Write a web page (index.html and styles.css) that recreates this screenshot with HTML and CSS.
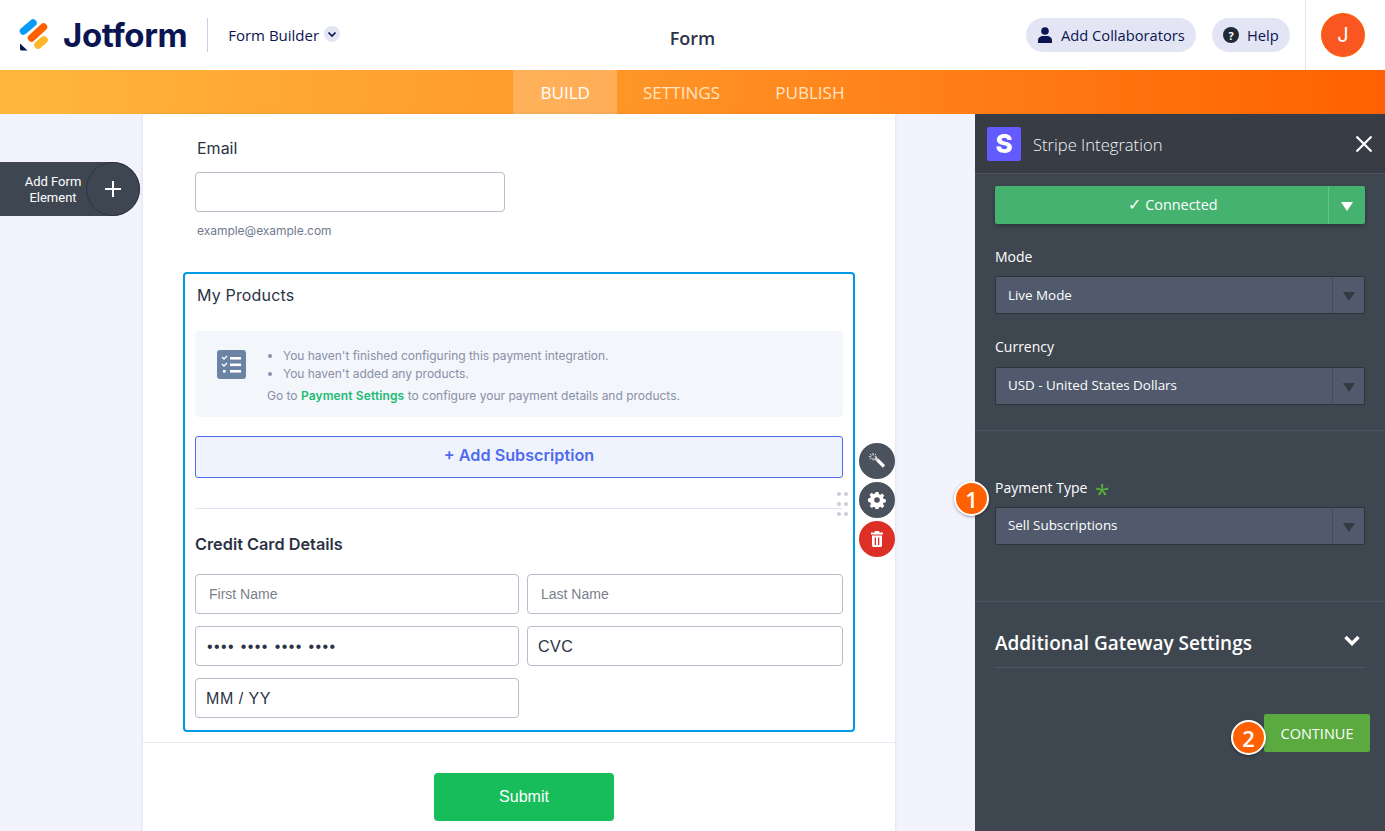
FILE: index.html
```html
<!DOCTYPE html>
<html lang="en">
<head>
<meta charset="utf-8">
<title>Form</title>
<link rel="stylesheet" href="styles.css">
</head>
<body>
<header class="topbar">
  <div class="brand">
    <svg class="logo" width="30" height="32" viewBox="0 0 30 32">
      <path d="M4.500 12 14 4" stroke="#0a9cf5" stroke-width="7.500" stroke-linecap="round" fill="none"/>
      <path d="M12.500 19 24.500 8" stroke="#ff6100" stroke-width="7.500" stroke-linecap="round" fill="none"/>
      <path d="M19 26l6-5" stroke="#ffb629" stroke-width="7.500" stroke-linecap="round" fill="none"/>
      <path d="M1 24.500 8.500 31.500H2.500Q1 31.500 1 30Z" fill="#0a1551"/>
    </svg>
    <span class="wordmark">Jotform</span>
    <span class="brand-sep"></span>
    <span class="builder">Form Builder</span>
    <span class="builder-caret">
      <svg width="10" height="7" viewBox="0 0 10 7"><path d="M1.500 1.500 5 5l3.500-3.500" fill="none" stroke="#0a1551" stroke-width="1.700"/></svg>
    </span>
  </div>
  <div class="page-title">Form</div>
  <div class="actions">
    <button class="pill pill-collab">
      <svg width="14" height="16" viewBox="0 0 14 16"><circle cx="7" cy="4" r="3.800" fill="#0a1551"/><path d="M0 16v-2.400C0 10.500 2.500 9 5 9h4c2.500 0 5 1.500 5 4.600V16z" fill="#0a1551"/></svg>
      Add Collaborators
    </button>
    <button class="pill pill-help">
      <span class="help-icon">?</span>
      Help
    </button>
    <div class="avatar-wrap"><span class="avatar">J</span></div>
  </div>
</header>

<nav class="tabs">
  <a class="tab tab-active">BUILD</a>
  <a class="tab">SETTINGS</a>
  <a class="tab">PUBLISH</a>
</nav>

<main class="workspace">
  <div class="add-element">
    <span class="add-label">Add Form<br>Element</span>
    <span class="add-circle">
      <svg width="18" height="18" viewBox="0 0 18 18"><path d="M9 1v16M1 9h16" stroke="#fff" stroke-width="2"/></svg>
    </span>
  </div>

  <section class="canvas">
    <div class="form-card">
      <div class="email-field">
        <label class="field-label">Email</label>
        <div class="text-box"></div>
        <div class="helper">example@example.com</div>
      </div>

      <div class="products">
        <div class="products-title">My Products</div>
        <div class="notice">
          <svg class="notice-icon" width="29" height="29" viewBox="0 0 29 29">
            <rect width="29" height="29" rx="3" fill="#6b84a3"/>
            <path d="M5 7l2 2 3-3M5 14l2 2 3-3" fill="none" stroke="#fff" stroke-width="1.300"/>
            <rect x="13" y="7" width="11" height="2.600" fill="#fff"/>
            <rect x="13" y="13.500" width="11" height="2.600" fill="#fff"/>
            <rect x="13" y="20" width="11" height="2.600" fill="#fff"/>
            <rect x="6" y="20" width="2.600" height="2.600" fill="#fff"/>
          </svg>
          <div class="notice-text">
            <ul class="notice-list">
              <li>You haven't finished configuring this payment integration.</li>
              <li>You haven't added any products.</li>
            </ul>
            <p class="notice-go">Go to <a class="notice-link">Payment Settings</a> to configure your payment details and products.</p>
          </div>
        </div>
        <button class="add-sub">+ Add Subscription</button>
        <hr class="products-rule">
        <h3 class="cc-title">Credit Card Details</h3>
        <div class="cc-grid">
          <div class="cc-input cc-placeholder">First Name</div>
          <div class="cc-input cc-placeholder cc-second">Last Name</div>
          <div class="cc-input cc-value cc-dots">•••• •••• •••• ••••</div>
          <div class="cc-input cc-value cc-second">CVC</div>
          <div class="cc-input cc-value">MM / YY</div>
        </div>

        <span class="grip"><i></i><i></i><i></i><i></i><i></i><i></i></span>
        <div class="tools">
          <span class="tool">
            <svg width="18" height="18" viewBox="0 0 18 18"><path d="M9.500 8 16 14.500" stroke="#fff" stroke-width="3.200" fill="none"/><path d="M7 6 9.500 8" stroke="#d5d8dd" stroke-width="3.200" fill="none"/><path d="M5 1v2.500M5 6v2.500M.8 4.800h2.500M6.700 4.800h2M2 2l1.500 1.500M2 7.500 3.500 6M8 2 6.800 3.200" stroke="#fff" stroke-width=".9" fill="none"/></svg>
          </span>
          <span class="tool">
            <svg width="18" height="18" viewBox="0 0 18 18"><path fill="#fff" fill-rule="evenodd" d="M7.500 1h3l.4 2.200 1.400.6 1.900-1.300 2.100 2.100-1.300 1.900.6 1.400 2.200.4v3l-2.200.4-.6 1.400 1.300 1.900-2.100 2.100-1.900-1.300-1.400.6-.4 2.200h-3l-.4-2.200-1.400-.6-1.900 1.300-2.100-2.100 1.300-1.900-.6-1.400L0 10.500v-3l2.200-.4.6-1.400L1.500 3.800l2.100-2.100 1.900 1.300 1.600-.6zM9 6.200a2.800 2.800 0 1 0 0 5.600 2.800 2.800 0 0 0 0-5.600z"/></svg>
          </span>
          <span class="tool tool-danger">
            <svg width="12" height="16" viewBox="0 0 12 16"><path fill="#fff" fill-rule="evenodd" d="M4 0h4l.7 1.500H12v2H0v-2h3.300zM1 4.500h10v10c0 .8-.7 1.500-1.500 1.500h-7C1.700 16 1 15.300 1 14.500zM3.700 6.500v7.500h1.300V6.500zM7 6.500v7.500h1.300V6.500z"/></svg>
          </span>
        </div>
      </div>

      <div class="submit-row">
        <button class="submit">Submit</button>
      </div>
    </div>
  </section>

  <aside class="panel">
    <div class="panel-head">
      <span class="stripe-logo">S</span>
      <span class="panel-title">Stripe Integration</span>
      <svg class="panel-close" width="18" height="18" viewBox="0 0 18 18"><path d="M1.500 1.500l15 15M16.500 1.500l-15 15" stroke="#fff" stroke-width="2.200"/></svg>
    </div>
    <div class="panel-body">
      <div class="connected">
        <span class="connected-main"><span class="connected-check">✓</span> Connected</span>
        <span class="connected-caret"><i class="tri tri-white"></i></span>
      </div>

      <div class="panel-group panel-group-first">
        <div class="panel-label">Mode</div>
        <div class="select"><span class="select-text">Live Mode</span><span class="select-caret"><i class="tri"></i></span></div>
      </div>
      <div class="panel-group panel-group-second">
        <div class="panel-label">Currency</div>
        <div class="select"><span class="select-text">USD - United States Dollars</span><span class="select-caret"><i class="tri"></i></span></div>
      </div>
    </div>
    <hr class="panel-rule panel-rule-a">
    <div class="panel-body panel-pay">
      <div class="panel-label">Payment Type <span class="req">*</span></div>
      <div class="select"><span class="select-text">Sell Subscriptions</span><span class="select-caret"><i class="tri"></i></span></div>
    </div>
    <hr class="panel-rule panel-rule-b">
    <div class="panel-body">
      <div class="gateway">
        <span class="gateway-title">Additional Gateway Settings</span>
        <svg width="16" height="11" viewBox="0 0 16 11"><path d="M1.500 2 8 8.500 14.500 2" fill="none" stroke="#fff" stroke-width="3.500"/></svg>
      </div>
    </div>
    <div class="continue-row">
      <span class="step step-two">2</span>
      <button class="continue">CONTINUE</button>
    </div>
    <span class="step step-one">1</span>
  </aside>
</main>
</body>
</html>
```
FILE: styles.css
```css
* { box-sizing: border-box; }
html, body { margin: 0; height: 831px; overflow: hidden; }
body { font-family: "Inter", sans-serif; display: flex; flex-direction: column; background: #f3f3fe; color: #2c3345; }
button { font: inherit; border: 0; padding: 0; }

.topbar { height: 70px; flex: none; background: #fff; display: grid; grid-template-columns: 1fr auto 1fr; align-items: center; }
.brand { display: flex; align-items: center; padding-left: 19px; }
.logo { flex: none; }
.wordmark { font-family: "Inter", sans-serif; font-weight: 700; font-size: 33px; letter-spacing: -0.4px; color: #0a1551; margin-left: 14px; line-height: 36px; }
.brand-sep { width: 1px; height: 34px; background: #c8ceed; margin-left: 20px; }
.builder { font-family: "Open Sans", sans-serif; font-size: 15px; color: #0a1551; margin-left: 20px; }
.builder-caret { width: 16px; height: 16px; border-radius: 50%; background: #e3e5f5; margin-left: 5px; margin-top: -2px; display: flex; align-items: center; justify-content: center; }
.page-title { font-family: "Open Sans", sans-serif; font-weight: 600; font-size: 18px; color: #2c3345; margin-top: 6px; }
.actions { display: flex; align-items: center; justify-content: flex-end; height: 70px; }
.pill { height: 34px; border-radius: 17px; background: #e3e5f5; display: flex; align-items: center; font-family: "Open Sans", sans-serif; font-weight: 500; font-size: 14.700px; color: #0a1551; }
.pill-collab { width: 170px; padding-left: 12px; gap: 9px; }
.pill-help { width: 78px; padding-left: 11px; gap: 8px; margin-left: 16px; }
.help-icon { width: 16px; height: 16px; border-radius: 50%; background: #1f2a37; color: #fff; font-size: 11px; font-weight: 700; display: flex; align-items: center; justify-content: center; }
.avatar-wrap { width: 80px; height: 70px; margin-left: 15px; border-left: 1px solid #e3e5ee; display: flex; align-items: center; padding-left: 15px; }
.avatar { width: 44px; height: 44px; border-radius: 50%; background: #f95622; border: 1px solid #ff6100; color: #fff; font-family: "Inter", sans-serif; font-size: 20px; display: flex; align-items: center; justify-content: center; }

.tabs { height: 44px; flex: none; display: flex; justify-content: center; background: linear-gradient(90deg, #ffb63b 0%, #ff9a2b 40%, #ff6100 100%); font-family: "Open Sans", sans-serif; font-size: 17.100px; }
.tab { display: flex; align-items: center; padding: 0 27px; color: #ffe4c4; }
.tab-active { background: rgba(255,255,255,.22); color: #fff; }
.tab:nth-child(2) { padding-left: 26px; padding-right: 28px; }

.workspace { flex: 1; display: flex; position: relative; min-height: 0; }
.add-element { position: absolute; left: 0; top: 48px; width: 140px; height: 54px; background: #3e4652; border-radius: 0 27px 27px 0; color: #fff; display: flex; align-items: center; font-family: "Roboto", sans-serif; font-size: 13px; line-height: 16px; }
.add-label { width: 86px; padding: 2px 0 0 20px; text-align: center; white-space: nowrap; }
.add-circle { position: absolute; right: 0; top: 0; width: 54px; height: 54px; border-radius: 50%; border: 1px solid #2c3345; display: flex; align-items: center; justify-content: center; }

.canvas { flex: 1; min-width: 0; padding-left: 143px; }
.form-card { width: 752px; height: 717px; background: #fff; box-shadow: 0 0 3px rgba(84,95,111,.16); }

.email-field { padding: 24px 52px 0; height: 158px; }
.field-label { display: block; font-size: 16px; line-height: 20px; color: #2c3345; padding-left: 2px; font-weight: 400; }
.text-box { width: 310px; height: 40px; margin-top: 14px; background: #fff; border: 1px solid #b8bdc9; border-radius: 4px; }
.helper { font-size: 12px; line-height: 16px; color: #6f7a90; margin-top: 11px; padding-left: 2px; letter-spacing: -.03px; }

.products { position: relative; width: 672px; height: 460px; margin-left: 40px; border: 2px solid #0099e5; border-radius: 4px; padding: 0 10px; }
.products-title { font-size: 16px; line-height: 20px; padding: 11px 2px 0; height: 57px; letter-spacing: .16px; }
.notice { height: 86px; background: #f3f6fb; border-radius: 4px; display: flex; }
.notice-icon { flex: none; margin: 19px 0 0 22px; }
.notice-text { margin-left: 21px; padding-top: 16px; font-size: 12px; line-height: 18.400px; color: #8a8fa8; }
.notice-list { margin: 0; padding: 0 0 0 16px; letter-spacing: -.03px; }
.notice-go { margin: 3.400px 0 0; }
.notice-link { color: #20bb73; font-weight: 600; letter-spacing: .12px; }
.add-sub { display: block; width: 648px; height: 42px; margin-top: 19px; padding-bottom: 4px; background: #eff3fe; border: 1px solid #4f6bed; border-radius: 3px; color: #4f6bed; font-weight: 600; font-size: 16.200px; }
.products-rule { margin: 30px 0 0; border: 0; border-top: 1px solid #e3e5f5; width: 648px; }
.cc-title { margin: 25px 0 0; font-size: 16.300px; line-height: 20px; font-weight: 600; color: #2c3345; }
.cc-grid { display: grid; grid-template-columns: 324px 316px; column-gap: 8px; row-gap: 12px; margin-top: 20px; }
.cc-input { height: 40px; border: 1px solid #b8bdc9; border-radius: 4px; background: #fff; display: flex; align-items: center; font-family: "Liberation Sans", sans-serif; }
.cc-placeholder { font-size: 14px; color: #7b7f8a; padding-left: 13px; }
.cc-value { font-size: 16px; color: #2c3345; padding: 2px 0 0 10px; letter-spacing: .55px; }
.cc-dots { letter-spacing: 1.400px; padding-left: 11px; }

.grip { position: absolute; left: 652px; top: 218px; width: 10px; display: grid; grid-template-columns: 3px 3px; gap: 6px 4px; }
.grip i { width: 4px; height: 4px; border-radius: 50%; background: #c8ced8; }
.tools { position: absolute; left: 674px; top: 169px; display: flex; flex-direction: column; gap: 3px; }
.tool { width: 36px; height: 36px; border-radius: 50%; background: #4a525d; display: flex; align-items: center; justify-content: center; }
.tool-danger { background: #dc2f25; }

.submit-row { margin-top: 10px; border-top: 1px solid #e8e9f3; padding: 30px 0 0 10px; display: flex; justify-content: center; }
.submit { width: 180px; height: 48px; background: #18bd5b; border-radius: 4px; color: #fff; font-family: "Liberation Sans", sans-serif; font-size: 16px; }

.panel { position: relative; flex: none; width: 410px; background: #3e4650; color: #fff; font-family: "Open Sans", sans-serif; }
.panel-head { height: 60px; background: #373c45; border-bottom: 1px solid #4b535e; display: flex; align-items: center; padding: 0 12px; }
.stripe-logo { width: 34px; height: 34px; border-radius: 2px; background: #635bff; color: #fff; font-family: "Inter", sans-serif; font-weight: 800; font-size: 26px; display: flex; align-items: center; justify-content: center; }
.panel-title { margin-left: 12px; padding-top: 1px; font-size: 16.600px; font-weight: 300; flex: 1; color: #f2f4f7; }
.panel-close { flex: none; }
.panel-body { padding: 0 20px; }
.connected { margin-top: 12px; height: 38px; background: #45b36f; border-radius: 2px; display: flex; box-shadow: 0 2px 4px rgba(0,0,0,.25); font-size: 14.400px; }
.connected-main { flex: 1; display: flex; align-items: center; justify-content: center; padding: 0 0 2px 23px; white-space: pre; }
.connected-check { font-size: 16px; line-height: 16px; }
.connected-caret { width: 37px; border-left: 1px solid #62c487; display: flex; align-items: center; justify-content: center; }
.tri { display: block; width: 0; height: 0; border-left: 6px solid transparent; border-right: 6px solid transparent; border-top: 9px solid #343a43; margin-top: 2px; }
.tri-white { border-top-color: #fff; }
.panel-group-first { margin-top: 23px; }
.panel-group-second { margin-top: 23px; }
.panel-group-second .panel-label { margin-bottom: 10px; }
.panel-label { font-size: 14px; line-height: 20px; color: #fff; margin-bottom: 9px; }
.select { height: 38px; background: #505a6c; border: 1px solid #2e333b; border-radius: 1px; display: flex; align-items: center; font-size: 13.400px; font-weight: 500; }
.select-text { flex: 1; padding-left: 12px; }
.panel-group-second .select-text, .panel-pay .select-text { padding-bottom: 2px; }
.select-caret { width: 32px; height: 100%; border-left: 1px solid #434b59; display: flex; align-items: center; justify-content: center; }
.panel-rule { margin: 0; border: 0; border-top: 1px solid #4b535e; }
.panel-rule-a { margin-top: 25px; }
.panel-pay { margin-top: 47px; }
.panel-pay .panel-label { margin-bottom: 9px; }
.req { color: #57ad3c; font-size: 26px; line-height: 10px; margin-left: 4px; vertical-align: -10px; }
.panel-rule-b { margin-top: 56px; }
.gateway { margin-top: 26px; height: 40px; border-bottom: 1px solid #4f5a6b; display: flex; justify-content: space-between; padding: 0 5px 0 0; }
.gateway-title { font-size: 18.950px; font-weight: 600; line-height: 30px; }
.gateway svg { margin-top: 7px; }
.continue-row { display: flex; justify-content: flex-end; align-items: center; margin-top: 46px; padding-right: 15px; }
.continue { width: 106px; height: 38px; background: #5aaa40; color: #fff; border-radius: 2px; font-family: "Open Sans", sans-serif; font-size: 14.500px; }
.step { position: absolute; width: 35px; height: 35px; border-radius: 50%; background: #ff6100; border: 2px solid #fff; color: #fff; font-family: "Open Sans", sans-serif; font-weight: 600; font-size: 22px; display: flex; align-items: center; justify-content: center; box-shadow: 0 1px 3px rgba(0,0,0,.35); }
.step-one { left: -21px; top: 367px; }
.step-two { left: 256px; top: 606px; }
```
